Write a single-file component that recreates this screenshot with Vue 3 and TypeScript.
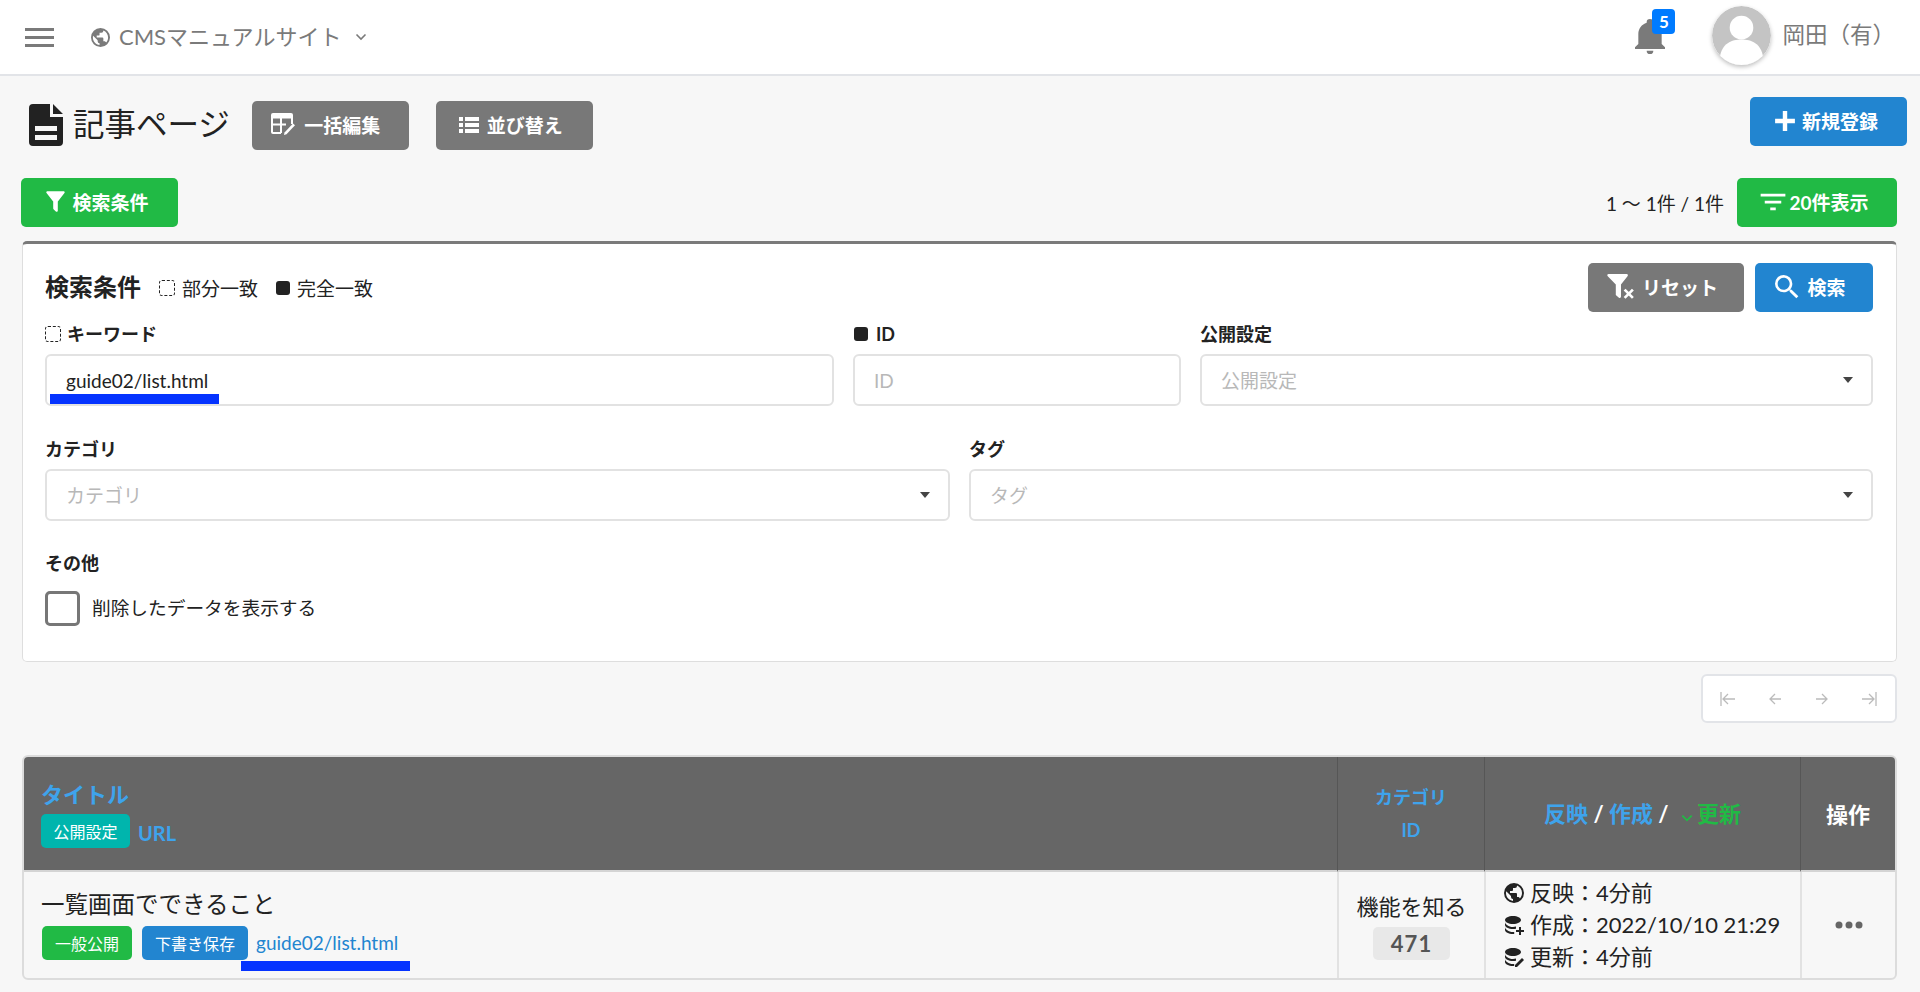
<script setup lang="ts">
const earth = 'M17.9,17.39C17.64,16.59 16.89,16 16,16H15V13A1,1 0 0,0 14,12H8V10H10A1,1 0 0,0 11,9V7H13A2,2 0 0,0 15,5V4.59C17.93,5.77 20,8.64 20,12C20,14.08 19.2,15.97 17.9,17.39M11,19.93C7.05,19.44 4,16.08 4,12C4,11.38 4.08,10.78 4.21,10.21L9,15V16A2,2 0 0,0 11,18M12,2A10,10 0 0,0 2,12A10,10 0 0,0 12,22A10,10 0 0,0 22,12A10,10 0 0,0 12,2Z'
const filter = 'M14,12V19.88C14.04,20.18 13.94,20.5 13.71,20.71C13.32,21.1 12.69,21.1 12.3,20.71L10.29,18.7C10.06,18.47 9.96,18.16 10,17.87V12H9.97L4.21,4.62C3.87,4.19 3.95,3.56 4.38,3.22C4.57,3.08 4.78,3 5,3H19C19.22,3 19.43,3.08 19.62,3.22C20.05,3.56 20.13,4.19 19.79,4.62L14.03,12H14Z'
const db = 'M12,3C7.58,3 4,4.79 4,7C4,9.21 7.58,11 12,11C16.42,11 20,9.21 20,7C20,4.79 16.42,3 12,3M4,9V12C4,14.21 7.58,16 12,16C13,16 14,15.9 15,15.7V13.6C14,13.85 13,14 12,14C7.58,14 4,11.21 4,9M4,14V17C4,19.21 7.58,21 12,21C12.4,21 12.8,21 13.2,20.95V18.9C12.8,19 12.4,19 12,19C7.58,19 4,16.21 4,14Z'
</script>

<template>
  <div class="page">
    <header class="topbar">
      <svg class="burger" viewBox="0 0 29 19"><path d="M0 0h29v3H0zM0 8h29v3H0zM0 16h29v3H0z" /></svg>
      <svg class="globe" viewBox="2 2 20 20"><path :d="earth" /></svg>
      <span class="site">CMSマニュアルサイト</span>
      <svg class="chev" viewBox="0 0 12 8"><path d="M1.500 1.500 6 6l4.500-4.500" /></svg>
      <div class="bell-wrap">
        <svg class="bell" viewBox="3 2 18 21"><path d="M21,19V20H3V19L5,17V11C5,7.9 7.03,5.17 10,4.29C10,4.19 10,4.1 10,4A2,2 0 0,1 14,4C14,4.1 14,4.19 14,4.29C16.97,5.17 19,7.9 19,11V17L21,19M14,21A2,2 0 0,1 10,21" /></svg>
        <span class="badge">5</span>
      </div>
      <div class="avatar">
        <svg viewBox="0 0 60 60"><circle cx="30" cy="30" r="30" fill="#c4c4c4" /><circle cx="30" cy="22" r="12" fill="#fff" /><path d="M8 52c2-14 12-18 22-18s20 4 22 18a30 30 0 0 1-44 0Z" fill="#fff" /></svg>
      </div>
      <span class="user">岡田（有）</span>
    </header>

    <main class="content">
      <div class="title-row">
        <svg class="doc" viewBox="0 0 34 42"><path fill-rule="evenodd" d="M4 0h17v13h13v25a4 4 0 0 1-4 4H4a4 4 0 0 1-4-4V4a4 4 0 0 1 4-4ZM6 22v5h22v-5ZM6 31v5h22v-5ZM24 0l10 10H24Z" /></svg>
        <h1>記事ページ</h1>
        <button class="btn gray bulk">
          <svg class="ic" viewBox="0 0 24 22"><path d="M2 0h18a2 2 0 0 1 2 2v3.500H0V2a2 2 0 0 1 2-2Z" /><path d="M1 5v14a1 1 0 0 0 1 1h8M21 5v6M1 11.500h14M10 5v15" fill="none" stroke="currentColor" stroke-width="2" /><path d="M22 10.500l2 1.800-8.500 9-2.500.7.500-2.500Z" /></svg>
          一括編集
        </button>
        <button class="btn gray sort">
          <svg class="ic" viewBox="0 0 24 24"><path d="M2 4h4v4H2zM8 4h14v4H8zM2 10h4v4H2zM8 10h14v4H8zM2 16h4v4H2zM8 16h14v4H8z" /></svg>
          並び替え
        </button>
        <button class="btn blue add">
          <svg class="ic plus" viewBox="0 0 20 20"><path d="M8 1h4v7h7v4h-7v7H8v-7H1V8h7Z" /></svg>
          新規登録
        </button>
      </div>

      <div class="tool-row">
        <button class="btn green cond">
          <svg class="ic" viewBox="3 2 18 20"><path :d="filter" /></svg>
          検索条件
        </button>
        <span class="count">1 〜 1件 / 1件</span>
        <button class="btn green per">
          <svg class="ic" viewBox="3 4 18 16"><path d="M6,13H18V11H6M3,6V8H21V6M10,18H14V16H10V18Z" /></svg>
          20件表示
        </button>
      </div>

      <section class="card">
        <div class="card-head">
          <h2>検索条件</h2>
          <span class="mark dashed first"></span><span class="legend">部分一致</span>
          <span class="mark solid"></span><span class="legend">完全一致</span>
          <button class="btn gray reset">
            <svg class="ic" viewBox="0 0 28 26"><path d="M1.500 1h17.500c1 0 1.500 1 1 1.800l-6.500 8.200v12c0 1-1.200 1.500-2 .8l-3-2.600v-10.200L.500 2.800C0 2 .500 1 1.500 1Z" /><path d="M17 16l8 8M25 16l-8 8" stroke="#fff" stroke-width="2.600" /></svg>
            リセット
          </button>
          <button class="btn blue search">
            <svg class="ic" viewBox="3 3 18 18"><path d="M9.500,3A6.500,6.500 0 0,1 16,9.500C16,11.110 15.410,12.590 14.440,13.730L14.710,14H15.500L20.500,19L19,20.500L14,15.500V14.710L13.730,14.440C12.590,15.410 11.110,16 9.500,16A6.500,6.500 0 0,1 3,9.500A6.500,6.500 0 0,1 9.500,3M9.500,5C7,5 5,7 5,9.500C5,12 7,14 9.500,14C12,14 14,12 14,9.500C14,7 12,5 9.500,5Z" /></svg>
            検索
          </button>
        </div>

        <div class="form-row three">
          <label class="field">
            <span class="label"><span class="mark dashed small"></span>キーワード</span>
            <span class="marked">
              <input class="control" value="guide02/list.html" />
              <i class="redact redact-input"></i>
            </span>
          </label>
          <label class="field">
            <span class="label"><span class="mark solid small"></span>ID</span>
            <input class="control" placeholder="ID" />
          </label>
          <div class="field">
            <span class="label">公開設定</span>
            <div class="control select"><span>公開設定</span><i class="caret"></i></div>
          </div>
        </div>

        <div class="form-row two">
          <div class="field">
            <span class="label">カテゴリ</span>
            <div class="control select"><span>カテゴリ</span><i class="caret"></i></div>
          </div>
          <div class="field">
            <span class="label">タグ</span>
            <div class="control select"><span>タグ</span><i class="caret"></i></div>
          </div>
        </div>

        <div class="other">
          <span class="label">その他</span>
          <label class="check"><span class="box"></span><span class="check-text">削除したデータを表示する</span></label>
        </div>
      </section>

      <div class="pager-row">
        <nav class="pager">
          <svg viewBox="0 0 18 16"><path d="M2 1v14M16 8H4M9 3 4 8l5 5" /></svg>
          <svg viewBox="0 0 18 16"><path d="M15 8H4M9 3 4 8l5 5" /></svg>
          <svg viewBox="0 0 18 16"><path d="M3 8h11M9 3l5 5-5 5" /></svg>
          <svg viewBox="0 0 18 16"><path d="M16 1v14M2 8h12M9 3l5 5-5 5" /></svg>
        </nav>
      </div>

      <table class="list">
        <colgroup><col /><col class="c2" /><col class="c3" /><col class="c4" /></colgroup>
        <thead>
          <tr>
            <th class="th-title">
              <div class="sort-link big">タイトル</div>
              <div class="th-sub"><span class="tag teal">公開設定</span><span class="sort-link url-head">URL</span></div>
            </th>
            <th class="th-cat"><div class="sort-link">カテゴリ</div><div class="sort-link id">ID</div></th>
            <th class="th-date">
              <span class="sort-link">反映</span> / <span class="sort-link">作成</span> /
              <svg class="mini" viewBox="0 0 12 8"><path d="M2 2l4 4 4-4" /></svg><span class="sort-on">更新</span>
            </th>
            <th class="th-op">操作</th>
          </tr>
        </thead>
        <tbody>
          <tr>
            <td class="td-title">
              <div class="row-title">一覧画面でできること</div>
              <div class="row-tags">
                <span class="tag green-tag">一般公開</span>
                <span class="tag blue-tag">下書き保存</span>
                <a class="url">guide02/list.html<i class="redact redact-url"></i></a>
              </div>
            </td>
            <td class="td-cat"><div>機能を知る</div><span class="num">471</span></td>
            <td class="td-date">
              <div><svg viewBox="2 2 20 20"><path :d="earth" /></svg>反映：4分前</div>
              <div><svg viewBox="3 2 20 20"><path :d="db" /><path d="M18 14h2v3h3v2h-3v3h-2v-3h-3v-2h3Z" /></svg>作成：2022/10/10 21:29</div>
              <div><svg viewBox="3 2 20 20"><path :d="db" /><path d="M21 13l2 2-7 7h-2v-2Z" /></svg>更新：4分前</div>
            </td>
            <td class="td-op"><svg viewBox="0 0 28 8"><circle cx="4" cy="4" r="3.500" /><circle cx="14" cy="4" r="3.500" /><circle cx="24" cy="4" r="3.500" /></svg></td>
          </tr>
        </tbody>
      </table>
    </main>
  </div>
</template>

<style>
html, body { margin: 0; background: #f7f7f7; }
</style>

<style scoped>
.page { font-family: Lato, "Noto Sans CJK JP", sans-serif; color: #222; height: 992px; overflow: hidden; background: #f7f7f7; font-size: 19px; }
svg { display: block; fill: currentColor; }
h1, h2 { margin: 0; }
button { font-family: inherit; cursor: pointer; }

.topbar { height: 74px; background: #fff; border-bottom: 2px solid #e2e4e8; display: flex; align-items: center; color: #7a7a7a; padding-left: 25px; }
.burger { width: 29px; height: 19px; }
.globe { width: 19px; height: 19px; margin-left: 37px; }
.site { font-size: 22px; margin-left: 9px; margin-top: -5px; }
.chev { width: 12px; height: 8px; margin-left: 14px; fill: none; stroke: currentColor; stroke-width: 1.600; }
.bell-wrap { margin-left: auto; position: relative; width: 30px; height: 35px; margin-top: -2px; left: 1px; }
.bell { width: 30px; height: 35px; }
.badge { position: absolute; left: 17px; top: -10px; width: 23px; height: 25px; border-radius: 4px; background: #007bff; color: #fff; font-weight: 700; font-size: 17px; line-height: 25px; text-align: center; }
.avatar { width: 59px; height: 59px; margin-left: 48px; border-radius: 50%; box-shadow: 0 2px 4px rgba(0,0,0,.25); overflow: hidden; margin-top: -3px; }
.user { font-size: 22.500px; margin-left: 11px; margin-right: 25px; margin-top: -9px; }

.content { padding: 0 23px 0 22px; }
.title-row { display: flex; align-items: flex-start; height: 102px; position: relative; }
.doc { width: 34px; height: 42px; margin: 28px 0 0 7px; color: #222; }
h1 { font-size: 31.500px; font-weight: 400; line-height: 42px; margin: 27px 0 0 10px; white-space: nowrap; }
.btn { border: 0; border-radius: 5px; color: #fff; font-weight: 700; font-size: 19px; height: 49px; display: inline-flex; align-items: center; justify-content: center; gap: 6px; padding: 0 0 2px; flex: none; }
.gray { background: #787878; }
.blue { background: #2285d0; }
.green { background: #21ba45; }
.ic { width: 24px; height: 24px; flex: none; }
.plus { width: 22px; height: 22px; }
.bulk { width: 157px; margin: 25px 0 0 22px; padding-right: 9px; gap: 9px; }
.bulk .ic { width: 24px; height: 22px; margin-top: -2px; }
.sort { width: 157px; margin: 25px 0 0 27px; padding-right: 9px; }
.add { width: 157px; margin: 21px -10px 0 auto; padding-right: 5px; }

.tool-row { display: flex; align-items: center; height: 49px; }
.cond { width: 157px; margin-left: -1px; padding-right: 5px; }
.cond .ic { width: 21px; height: 23px; }
.count { margin-left: auto; font-size: 19px; }
.per { width: 160px; margin-left: 13px; gap: 3px; padding-right: 5px; }
.per .ic { width: 26px; height: 22px; }

.card { background: #fff; border: 1px solid #dedede; border-top: 3px solid #7a7a7a; border-radius: 5px; margin-top: 14px; height: 417px; padding: 0 23px 0 22px; box-sizing: content-box; }
.card-head { display: flex; align-items: center; height: 49px; margin-top: 19px; }
h2 { font-size: 24px; font-weight: 700; line-height: 47px; margin-bottom: 2px; }
.mark { display: inline-block; flex: none; width: 14px; height: 14px; border-radius: 3px; box-sizing: border-box; }
.mark.dashed { width: 16px; height: 16px; border: 1.500px dashed #222; }
.mark.solid { background: #222; }
.mark.small { margin-right: 8px; margin-left: 1px; }
.mark.dashed.small { margin-left: 0; margin-right: 6px; }
.mark.first { margin-left: 18px; }
.legend { font-size: 19px; margin-left: 7px; margin-right: 18px; }
.reset { width: 156px; margin-left: auto; padding-right: 7px; }
.reset .ic { width: 29px; height: 27px; }
.search { width: 118px; margin-left: 11px; gap: 8px; padding-right: 7px; }

.form-row { display: grid; gap: 19px; }
.three { grid-template-columns: 789px 328px 1fr; margin-top: 7px; }
.two { grid-template-columns: 905px 1fr; margin-top: 28px; }
.field { display: block; min-width: 0; }
.label { display: flex; align-items: center; font-size: 18px; font-weight: 700; line-height: 30px; height: 30px; margin-bottom: 5px; padding-top: 1px; margin-top: -1px; }
.control { display: flex; align-items: center; justify-content: space-between; box-sizing: border-box; width: 100%; height: 52px; border: 2px solid #e2e2e2; border-radius: 6px; background: #fff; padding: 0 18px 0 19px; font-family: inherit; font-size: 19px; color: #222; outline: 0; }
.control::placeholder { color: #b8b8b8; }
.select span { color: #b8b8b8; padding-bottom: 2px; }
.caret { width: 0; height: 0; border: 5px solid transparent; border-top: 6px solid #444; border-bottom: 0; }
.marked { display: block; position: relative; }
.redact { position: absolute; background: #0533ff; display: block; }
.redact-input { left: 5px; bottom: 2px; width: 169px; height: 10px; }

.other { margin-top: 27px; }
.other .label { margin-bottom: 13px; }
.check { display: flex; align-items: center; font-size: 18.700px; }
.check-text { padding-bottom: 4px; }
.box { width: 35px; height: 35px; box-sizing: border-box; border: 3px solid #777; border-radius: 5px; margin-right: 12px; background: #fff; }

.pager-row { display: flex; justify-content: flex-end; margin-top: 12px; }
.pager { width: 196px; height: 49px; box-sizing: border-box; background: #fff; border: 2px solid #e2e4e8; border-radius: 6px; display: flex; align-items: center; justify-content: space-between; padding: 0 17px 0 16px; color: #bbb; }
.pager svg { width: 18px; height: 16px; fill: none; stroke: currentColor; stroke-width: 1.300; }

.list { margin-top: 32px; width: 100%; table-layout: fixed; border-collapse: separate; border-spacing: 0; border: 2px solid #dcdcdc; border-radius: 6px; overflow: hidden; height: 225px; }
.c2 { width: 147px; }
.c3 { width: 316px; }
.c4 { width: 95px; }
th { box-sizing: border-box; background: #666; color: #fff; font-size: 22px; font-weight: 700; height: 115px; padding: 0; border-bottom: 2px solid #d4d4d4; border-left: 1px solid #565656; }
th:first-child { border-left: 0; }
td { padding: 0; border-left: 2px solid #e2e2e2; vertical-align: middle; }
td:first-child { border-left: 0; }
.sort-link { color: #3ea3ec; }
.sort-on { color: #21ba45; }
.th-title { text-align: left; padding-left: 17px; }
.big { font-size: 22px; line-height: 30px; }
.th-sub { display: flex; align-items: center; gap: 8px; margin-top: 4px; font-size: 20px; }
.url-head { margin-top: 4px; }
.tag { display: inline-flex; align-items: center; justify-content: center; height: 34px; border-radius: 5px; color: #fff; font-size: 16px; font-weight: 400; }
.teal { background: #00b5ad; width: 89px; }
.th-cat { font-size: 18px; line-height: 33px; }
.id { line-height: 33px; }
.th-date { padding-bottom: 4px; }
.th-op { padding-bottom: 2px; }
.mini { display: inline-block; width: 14px; height: 10px; fill: none; stroke: #21ba45; stroke-width: 1.500; margin: 0 3px 0 6px; vertical-align: -1px; }
.td-title { padding-left: 17px; padding-bottom: 6px; }
.row-title { font-size: 23.500px; line-height: 36px; margin-top: 1px; }
.row-tags { display: flex; align-items: center; margin-top: 4px; position: relative; }
.green-tag { background: #21ba45; width: 90px; margin-left: 1px; }
.blue-tag { background: #2285d0; width: 106px; margin-left: 10px; }
.url { color: #2285d0; font-size: 19px; margin-left: 8px; position: relative; }
.redact-url { left: -15px; top: 30px; width: 169px; height: 10px; }
.td-cat { text-align: center; font-size: 22px; padding-bottom: 2px; }
.num { display: inline-block; width: 77px; height: 33px; line-height: 33px; border-radius: 5px; background: #e8e8e8; color: #555; font-weight: 700; font-size: 22px; margin-top: 6px; letter-spacing: 1px; }
.td-date { font-size: 22px; line-height: 32px; padding-left: 18px; white-space: nowrap; }
.td-date div { display: flex; align-items: center; gap: 6px; }
.td-date svg { width: 20px; height: 20px; flex: none; }
.td-op svg { width: 28px; height: 8px; margin: 0 auto; color: #666; }
.th-op { color: #fff; }
</style>
